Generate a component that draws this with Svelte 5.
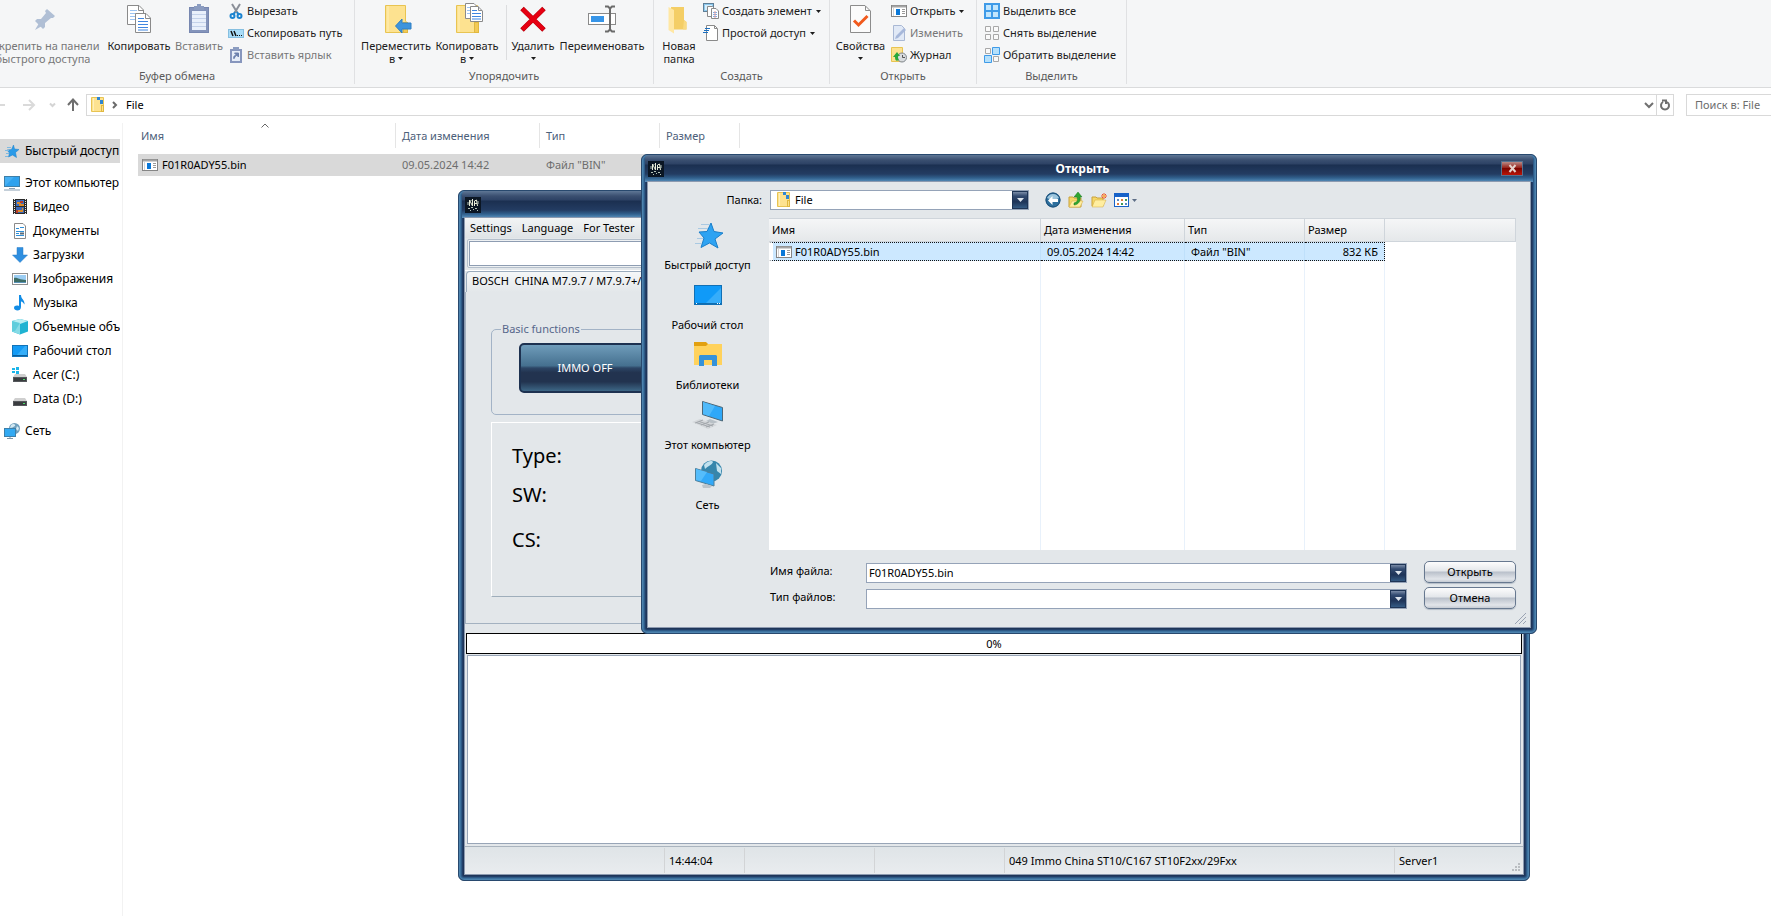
<script>
  const ribbon = [
    {
      label: 'Буфер обмена', width: 355, pad: 0, shift: true,
      big: [
        { icon: 'pin', w: 120, lines: ['Закрепить на панели', 'быстрого доступа'], off: true },
        { icon: 'copy', w: 72, lines: ['Копировать'] },
        { icon: 'paste', w: 48, lines: ['Вставить'], off: true }
      ],
      small: [
        { icon: 'cut', text: 'Вырезать' },
        { icon: 'path', text: 'Скопировать путь' },
        { icon: 'link', text: 'Вставить ярлык', off: true }
      ]
    },
    {
      label: 'Упорядочить', width: 299, pad: 3,
      big: [
        { icon: 'move', w: 76, lines: ['Переместить', 'в'], drop: true },
        { icon: 'copyto', w: 66, lines: ['Копировать', 'в'], drop: true, rule: true },
        { icon: 'delete', w: 46, lines: ['Удалить', ''], drop: true },
        { icon: 'rename', w: 92, lines: ['Переименовать'] }
      ],
      small: []
    },
    {
      label: 'Создать', width: 176, pad: 6,
      big: [{ icon: 'newfolder', w: 38, lines: ['Новая', 'папка'] }],
      small: [
        { icon: 'newitem', text: 'Создать элемент', drop: true },
        { icon: 'easy', text: 'Простой доступ', drop: true }
      ]
    },
    {
      label: 'Открыть', width: 147, pad: 0,
      big: [{ icon: 'props', w: 61, tight: true, lines: ['Свойства', ''], drop: true }],
      small: [
        { icon: 'bin', text: 'Открыть', drop: true },
        { icon: 'edit', text: 'Изменить', off: true },
        { icon: 'history', text: 'Журнал' }
      ]
    },
    {
      label: 'Выделить', width: 150, pad: 7,
      big: [],
      small: [
        { icon: 'selall', text: 'Выделить все' },
        { icon: 'selnone', text: 'Снять выделение' },
        { icon: 'selinv', text: 'Обратить выделение' }
      ]
    }
  ];

  const tree = [
    { icon: 'star', text: 'Быстрый доступ', root: true, on: true },
    { icon: 'pc', text: 'Этот компьютер', root: true, gap: true },
    { icon: 'video', text: 'Видео' },
    { icon: 'docs', text: 'Документы' },
    { icon: 'down', text: 'Загрузки' },
    { icon: 'pics', text: 'Изображения' },
    { icon: 'music', text: 'Музыка' },
    { icon: 'cube', text: 'Объемные объекты' },
    { icon: 'desk', text: 'Рабочий стол' },
    { icon: 'drivec', text: 'Acer (C:)' },
    { icon: 'drived', text: 'Data (D:)' },
    { icon: 'net', text: 'Сеть', root: true, gap: true }
  ];

  const places = [
    { icon: 'bigstar', text: 'Быстрый доступ' },
    { icon: 'bigdesk', text: 'Рабочий стол' },
    { icon: 'biglib', text: 'Библиотеки' },
    { icon: 'bigpc', text: 'Этот компьютер' },
    { icon: 'bignet', text: 'Сеть' }
  ];

  let fileName = $state('F01R0ADY55.bin');
</script>

{#snippet glyph(name)}
  {#if name === 'pin'}
    <path d="M20 6 28 13 26 15 24 15 18 20 18 24 16 26 8 18 10 16 14 16 19 10 18 8z" fill="#b0bfd5" /><path d="M12 20 15 23 8 27z" fill="#b0bfd5" />
  {:else if name === 'copy'}
    <path d="M4.500 2.500H16L20.500 7V21.500H4.500z" fill="#fff" stroke="#8a8a8a" /><path d="M15.500 2.500V7.500H20" fill="none" stroke="#8a8a8a" />
    <path d="M7 7.500H14M7 10.500H18M7 13.500H18M7 16.500H18" stroke="#9cc4f2" />
    <path d="M12.500 10.500H23L27.500 15V29.500H12.500z" fill="#fff" stroke="#8a8a8a" /><path d="M22.500 10.500V15.500H27" fill="none" stroke="#8a8a8a" />
    <path d="M15 15.500H21M15 18.500H25M15 21.500H25M15 24.500H25M15 27H25" stroke="#3f86e0" />
  {:else if name === 'paste'}
    <rect x="6.500" y="4.500" width="19" height="25" fill="#8494bb" stroke="#7787b0" /><rect x="9" y="8" width="14" height="19" fill="#e9f0fb" />
    <path d="M9 11.500H23M9 15.500H23M9 19.500H23M9 23.500H23" stroke="#c4d2ea" /><path d="M11 3H14V1H18V3H21V7H11z" fill="#8b9cc0" />
  {:else if name === 'move' || name === 'copyto'}
    <path d="M5.500 2.500H{name === 'move' ? '25.500V18' : '26.500V20'}L27.500 20V29.500H5.500z" fill="#fde290" stroke="#e8c452" /><path d="M8 3V29" stroke="#fff0b8" /><rect x="23.500" y="19.500" width="4" height="10" fill="#f3ca57" stroke="#e0b840" />
    {#if name === 'move'}
      <path d="M15.500 23 22 16V20H31V26H22V30z" fill="#3d94dd" stroke="#2f7fc4" />
    {:else}
      <path d="M14.500 .500H23L26.500 4V15.500H14.500z" fill="#fff" stroke="#8a8a8a" /><path d="M16 4.500H22M16 7.500H24M16 10.500H24" stroke="#9cc4f2" />
      <path d="M19.500 3.500H27L31.500 8V18.500H19.500z" fill="#fff" stroke="#8a8a8a" /><path d="M27.500 3.500V7.500H31" fill="none" stroke="#8a8a8a" /><path d="M21 7.500H26M21 10.500H30M21 13.500H30M21 16H30" stroke="#3f86e0" />
    {/if}
  {:else if name === 'delete'}
    <path d="M5 5.500 27 27M27 5.500 5 27" stroke="#b4000c" stroke-width="5" /><path d="M5.500 6 26.500 26.500M26.500 6 5.500 26.500" stroke="#e60012" stroke-width="4" />
  {:else if name === 'rename'}
    <rect x="2.500" y="10.500" width="27" height="11" fill="#fff" stroke="#8a8a8a" /><rect x="5" y="13" width="13" height="6" fill="#3795e8" />
    <path d="M19 3.500H22L24 5.500 26 3.500H29M24 5V27M19 28.500H22L24 26.500 26 28.500H29" fill="none" stroke="#6b6b6b" stroke-width="2" />
  {:else if name === 'newfolder'}
    <path d="M8 4H21V17L23.500 19V26.500H8z" fill="#f4ce66" /><path d="M5.500 4 11 7V30.500L5.500 27z" fill="#ffe7a3" /><path d="M21 17 23.500 19V26.500H20z" fill="#f9da82" />
  {:else if name === 'props'}
    <path d="M5.500 2.500H20L25.500 8V29.500H5.500z" fill="#fbfbfb" stroke="#8c8c8c" /><path d="M20.500 3V7.500H25" fill="none" stroke="#8c8c8c" /><path d="M9 17.500 13.500 22 22.500 13" fill="none" stroke="#f15a1d" stroke-width="3" />
  {:else if name === 'cut'}
    <path d="M4 1 9.500 10M12 1 6.500 10" stroke="#8a8f98" stroke-width="2" /><path d="M7 9 5 12M9 9 11 12" stroke="#1d84d0" stroke-width="2" /><circle cx="4.500" cy="13" r="2" fill="none" stroke="#1d84d0" stroke-width="2" /><circle cx="11.500" cy="13" r="2" fill="none" stroke="#1d84d0" stroke-width="2" />
  {:else if name === 'path'}
    <rect x=".500" y="4.500" width="15" height="8" fill="#a9dcf8" stroke="#86bfe0" /><path d="M3 6 5 11M6 6 8 11" stroke="#111" stroke-width="1.500" /><path d="M9 10.500H10M11 10.500H12M13 10.500H14" stroke="#111" />
  {:else if name === 'link'}
    <rect x="2" y="2" width="12" height="14" fill="#8796bd" /><rect x="4" y="4" width="8" height="10" fill="#e6edf8" /><rect x="5" y="0" width="6" height="3" fill="#8b9cc0" /><path d="M6 12C5 9 7 8 9 8M6.500 6H10.500V10z" fill="#6c80ad" stroke="#6c80ad" />
  {:else if name === 'newitem'}
    <rect x=".500" y=".500" width="10" height="8" fill="#8ec9ee" stroke="#5f7f97" /><rect x="2" y="2" width="7" height="5" fill="#d9effb" /><path d="M4.500 3.500H9.500L11.500 5.500V13.500H4.500z" fill="#fff" stroke="#8a8a8a" /><path d="M8.500 5.500H13L15.500 8V15.500H8.500z" fill="#fff" stroke="#8a8a8a" /><path d="M10 9.500H14M10 11.500H14M10 13.500H14" stroke="#7db0ea" /><path d="M12 8V15" stroke="#e39b9b" />
  {:else if name === 'easy'}
    <path d="M3.500 .500H11.500L14.500 3.500V15.500H3.500z" fill="#fff" stroke="#8a8a8a" /><path d="M11.500 .500V3.500H14" fill="none" stroke="#8a8a8a" /><path d="M2 3.500H7M1 5.500H6M0 7.500H5" stroke="#1b6fc0" />
  {:else if name === 'bin'}
    <rect x=".500" y="2.500" width="15" height="11" fill="#fff" stroke="#858585" /><path d="M1 3.500H15" stroke="#a5a5a5" stroke-width="2" /><rect x="5" y="6" width="4" height="6" fill="#0a78d8" /><path d="M11 6.500H14M11 8.500H14M11 10.500H14" stroke="#999" /><path d="M2.500 5V13" stroke="#d4d4d4" />
  {:else if name === 'edit'}
    <path d="M2.500 .500H10.500L13.500 3.500V15.500H2.500z" fill="#e1e9f6" stroke="#a9b8d4" /><path d="M4 14 5 11 13 3 15 5 7 13z" fill="#a7b8da" />
  {:else if name === 'history'}
    <path d="M.500 .500H11.500V14.500H.500z" fill="#fde290" stroke="#e8c452" /><circle cx="11" cy="10.500" r="4.500" fill="#d9dcdf" stroke="#7e858b" /><path d="M11.500 8V10.500H14" fill="none" stroke="#555" /><path d="M8 13C5 15 4 13 4 10H2L6 5 9 9H7C7 11 7 12 8 13z" fill="#2aa83a" />
  {:else if name === 'selall'}
    <path d="M0 0H16V16H0z" fill="#3f9be8" /><path d="M2 2H7V7H2zM9 2H14V7H9zM2 9H7V14H2zM9 9H14V14H9z" fill="#c2e6fd" />
  {:else if name === 'selnone'}
    <path d="M1.500 1.500H6.500V6.500H1.500zM9.500 1.500H14.500V6.500H9.500zM1.500 9.500H6.500V14.500H1.500zM9.500 9.500H14.500V14.500H9.500z" fill="#fafafa" stroke="#a8a8a8" />
  {:else if name === 'selinv'}
    <path d="M1.500 1.500H6.500V6.500H1.500zM9.500 9.500H14.500V14.500H9.500z" fill="#fafafa" stroke="#a8a8a8" /><path d="M8.500 .500H15.500V7.500H8.500zM.500 8.500H7.500V15.500H.500z" fill="#b5e0fb" stroke="#3f9be8" />
  {:else if name === 'star'}
    <path d="M9.500 2 10.500 6 15 6.500 11.500 9.500 12.500 14.500 8.500 12 4.500 14 5.500 10 3 7 7.500 6.500z" fill="#2b9be8" stroke="#1a7fc9" stroke-width=".5" /><path d="M3 4.500H7M1 7.500H5M2 10.500H5M1 13.500H4" stroke="#7fb9e0" />
  {:else if name === 'pc'}
    <rect x=".500" y="1.500" width="15" height="10" fill="#46b0f4" stroke="#3e7fa8" /><path d="M1 11 10 2H15V11z" fill="#2fa2ee" /><path d="M5 13.500H11M0 15H16" stroke="#8aa0b4" />
  {:else if name === 'video'}
    <rect x="1" y="0" width="14" height="15" fill="#2b2b2b" /><path d="M2.500 0V15M13.500 0V15" stroke="#e6e6e6" stroke-dasharray="1 1" /><rect x="4" y="1" width="8" height="6" fill="#3c6fc4" /><rect x="4" y="8" width="8" height="6" fill="#3a67b5" /><path d="M5 3H9V5H12V7H7V5H5zM6 11H10V9H11V13H6z" fill="#d98b2b" /><path d="M8 2H11V4H8zM4 11H6V14H4z" fill="#b83a2b" />
  {:else if name === 'docs'}
    <path d="M2.500 .500H11L13.500 3V15.500H2.500z" fill="#fff" stroke="#8a8a8a" /><path d="M4 5.500H7M8 4.500H12M4 8.500H12M4 10.500H7M4 12.500H12" stroke="#2e8fd8" /><path d="M8 10.500H12" stroke="#5d6b77" stroke-width="2" />
  {:else if name === 'down'}
    <path d="M5 .500H11V8H15.500L8 15.500 .500 8H5z" fill="#2f8fe0" stroke="#2b7cc6" stroke-width=".5" />
  {:else if name === 'pics'}
    <rect x=".500" y="2.500" width="15" height="11" fill="#fff" stroke="#8f8f8f" /><rect x="2" y="4" width="12" height="8" fill="#9bcdf3" /><path d="M2 7C5 6 7 9 14 9V12H2z" fill="#3d6d66" /><path d="M2 11H14V12H2z" fill="#5b93b8" />
  {:else if name === 'music'}
    <path d="M7 0H9C9 4 13 5 12.500 9.500 11.500 8 10.500 6.500 9 6.500V12C9 17 2 16 2 13 2 10.500 5 10 7 11z" fill="#128de6" />
  {:else if name === 'cube'}
    <path d="M8 0 16 2V12.500L8 15.500 0 12.500V2z" fill="#1fb3d2" /><path d="M0 2 8 4V15.500L0 12.500z" fill="#86dbe6" /><path d="M0 2 8 0 16 2 8 5z" fill="#b9eef2" /><path d="M0 2 8 4 3 12 0 12.500z" fill="#5fcddc" />
  {:else if name === 'desk'}
    <rect x=".500" y="2.500" width="15" height="11" fill="#149bf5" stroke="#1273b8" /><path d="M1 12.500H15" stroke="#0b5e9b" /><path d="M5 12 13 3H15V12z" fill="#35aef9" />
  {:else if name === 'drivec' || name === 'drived'}
    <path d="M3 7H13L15 10H1z" fill="#cfcfcf" /><rect x="1" y="10" width="14" height="5" fill="#55585c" /><rect x="2" y="11" width="12" height="3" fill="#3a3c3f" /><rect x="11" y="12" width="2" height="1" fill="#4be06a" />
    {#if name === 'drivec'}<path d="M0 1H3V3H0zM4 0H7V3H4zM0 4H3V6H0zM4 4H7V7H4z" fill="#1cb5ea" />{/if}
  {:else if name === 'net'}
    <circle cx="10.500" cy="5.500" r="5.500" fill="#6f9fbd" /><path d="M7 2C9 0 12 1 11 3 9 4 8 5 6 5zM13 3 15 5 14 8 12 6z" fill="#d3e9f3" /><rect x=".500" y="5.500" width="11" height="8" fill="#32a9f2" stroke="#3d7fa9" /><path d="M3 15.500H9M6 14V15" stroke="#7f95a6" />
  {:else if name === 'folder'}
    <path d="M.500 .500H12.500V14.500H.500z" fill="#fde290" stroke="#e8c452" /><path d="M2.500 1V14" stroke="#fff0b8" /><path d="M6 0H9V3H6zM9 3H12V7H9z" fill="#2f86d2" /><rect x="10.500" y="8.500" width="2" height="6" fill="#fbe08a" stroke="#e0b840" />
  {:else if name === 'app'}
    <rect width="16" height="16" fill="#0b1624" /><path d="M4.500 9V3L7.500 9V2M9.500 9V4L11.500 3 12.500 9M10 6.500H12" stroke="#e8ecd8" fill="none" /><path d="M3 5V8M6 3V4M13 4V7M3 11.500H5M6 10.500H8M10 11.500H12M5 13.500H6M8 12.500H9M12 13.500H13" stroke="#b4c2b8" fill="none" />
  {:else if name === 'bigstar'}
    <path d="M19 4 22 12.500 31 14 23 20 26 29 17.500 24 9 28.500 12 19 7 13 15 12.500z" fill="#2ea3f2" stroke="#1b7fca" /><path d="M9 5.500H18M6 9.500H16M5 19.500H11M3 24.500H10" stroke="#a9c9e2" />
  {:else if name === 'bigdesk'}
    <rect x="2.500" y="6.500" width="27" height="19" fill="#109af8" stroke="#1170b5" /><path d="M13 25 29 9V25z" fill="#36adfa" /><path d="M3 24.500H29" stroke="#0e6db0" /><path d="M4 24.500H5M25 24.500H26M27 24.500H28" stroke="#fff" />
  {:else if name === 'biglib'}
    <path d="M2 3H14L16 5V9H2z" fill="#e2a010" /><path d="M2 7H14L16 5H30V26H2z" fill="#ffd25c" /><path d="M7 17 8 16H24L25 17V27H20V21H12V27H7z" fill="#3492da" />
  {:else if name === 'bigpc'}
    <path d="M10.500 2.500 30.500 8.500V22L10.500 15.500z" fill="#2fa8f8" stroke="#4d6878" /><path d="M11 3 23 7 17 17 11 15z" fill="#50bafa" /><path d="M18 20 26 23 20 25 14 22z" fill="#b8c0c6" /><path d="M0 23 8 20 25 26 16 30z" fill="#d4d7da" /><path d="M4 23.500 18 28M7 22.500 21 27M3 24 11 21M9 26 17 23M14 28 22 25" stroke="#a2a7ac" />
  {:else if name === 'bignet'}
    <circle cx="19.500" cy="12" r="10.500" fill="#3686ac" /><path d="M12 6C15 2 20 1 21 3 20 6 16 7 13 10zM24 4 29 9 29 15 25 12z" fill="#c1e1ee" /><path d="M3.500 9.500 22 15V27L3.500 21.500z" fill="#32a9f8" stroke="#4d7f9a" /><path d="M4 10 15 13 9 22 4 21z" fill="#55bdfb" /><path d="M10 26 14 25 20 27 18 29 11 29z" fill="#bcc4ca" />
  {:else if name === 'back'}
    <circle cx="8" cy="8" r="7.500" fill="#2d6f9d" /><path d="M2 6A6.500 6.500 0 0 1 14 6C10 8 6 8 2 6z" fill="#9cc5dd" /><circle cx="8" cy="8" r="7" fill="none" stroke="#1e4f78" /><path d="M3 8.500 7.500 4V7H13V10H7.500V13z" fill="#fff" />
  {:else if name === 'up'}
    <path d="M1 5H5L6 6H13V15H1z" fill="#f5d767" stroke="#c9a13a" /><path d="M4 9H15L12 15H1z" fill="#ffeea0" stroke="#d1a840" stroke-width=".5" /><path d="M6 11C9 10 10 9 9 5H6L10 0 14 5H12C13 9 10 13 6 13z" fill="#2fa62f" stroke="#1d7a22" stroke-width=".5" />
  {:else if name === 'create'}
    <path d="M1 5H5L6 6H12V14H1z" fill="#f5d767" stroke="#c9a13a" /><path d="M4 8H15L12 15H1z" fill="#ffeea0" stroke="#d1a840" stroke-width=".5" /><path d="M13 1V7M10 4H16M11 2 15 6M15 2 11 6" stroke="#ee5a28" /><circle cx="13" cy="4" r="1" fill="#ffd34d" />
  {:else if name === 'view'}
    <rect x=".500" y="1.500" width="14" height="13" fill="#fff" stroke="#1762c8" /><rect y="1" width="15" height="4" fill="#1762c8" /><path d="M3 7H5V9H3zM11 11H13V13H11z" fill="#5a8ac0" /><path d="M7 7H9V9H7zM3 11H5V13H3z" fill="#e07b3c" /><path d="M11 7H13V9H11zM7 11H9V13H7z" fill="#3f9a55" />
  {/if}
{/snippet}

{#snippet icon(name, size = 16)}
  <svg class="ico" width={size} height={size} viewBox="0 0 {size} {size}" aria-hidden="true">{@render glyph(name)}</svg>
{/snippet}

{#snippet caret()}
  <svg class="caret" width="5" height="3" viewBox="0 0 5 3" aria-hidden="true"><path d="M0 0H5L2.500 3z" fill="currentColor" /></svg>
{/snippet}

{#snippet arrow()}
  <svg width="7" height="4" viewBox="0 0 7 4" aria-hidden="true"><path d="M0 0H7L3.500 4z" fill="#dfe6ee" /></svg>
{/snippet}

<div class="desktop">
  <header class="ribbon">
    {#each ribbon as g}
      <section class="group" style:width="{g.width}px" aria-label={g.label}>
        <div class="tools" class:shift={g.shift} style:padding-left="{g.pad}px">
          {#each g.big as b}
            <button class="big" class:off={b.off} style:width="{b.w}px">
              {@render icon(b.icon, 32)}
              {#each b.lines as line, i}
                <span class="line">{line}{#if b.drop && i === b.lines.length - 1}{@render caret()}{/if}</span>
              {/each}
            </button>
            {#if b.rule}<i class="rule"></i>{/if}
          {/each}
          {#if g.small.length}
            <div class="stack" class:spaced={g.big.length && !g.big[0].tight}>
              {#each g.small as s}
                <button class="small" class:off={s.off}>{@render icon(s.icon)}<span>{s.text}</span>{#if s.drop}{@render caret()}{/if}</button>
              {/each}
            </div>
          {/if}
        </div>
        <div class="caption">{g.label}</div>
      </section>
    {/each}
  </header>

  <div class="address">
    <nav class="arrows" aria-label="Переходы">
      <svg width="86" height="22" viewBox="0 0 86 22" aria-hidden="true">
        <path d="M-6 11H5M23 11H34M29 6 34 11 29 16" fill="none" stroke="#dadada" stroke-width="2" />
        <path d="M50 9.500 52.500 12 55 9.500" fill="none" stroke="#d4d4d4" stroke-width="2" />
        <path d="M73 17V6M68 11 73 5.500 78 11" fill="none" stroke="#6e6e6e" stroke-width="2" />
      </svg>
    </nav>
    <div class="crumbs">
      {@render icon('folder')}
      <svg width="6" height="8" viewBox="0 0 6 8" aria-hidden="true"><path d="M1 1 4 4 1 7" fill="none" stroke="#6a6a6a" stroke-width="2" /></svg>
      <span class="crumb">File</span>
      <svg class="end" width="10" height="8" viewBox="0 0 10 8" aria-hidden="true"><path d="M1 2 5 6 9 2" fill="none" stroke="#707070" stroke-width="2" /></svg>
      <button class="reload" aria-label="Обновить">
        <svg width="12" height="12" viewBox="0 0 12 12" aria-hidden="true"><path d="M8 3A4 4 0 1 1 4 3M3 1.500H7V5" fill="none" stroke="#707070" stroke-width="2" /></svg>
      </button>
    </div>
    <input class="search" placeholder="Поиск в: File" aria-label="Поиск в: File" />
  </div>

  <main class="explorer">
    <nav class="tree">
      {#each tree as t}
        <a href="#top" class:root={t.root} class:on={t.on} class:gap={t.gap}>{@render icon(t.icon)}<span>{t.text}</span></a>
      {/each}
    </nav>
    <div class="files">
      <svg class="sort" width="8" height="5" viewBox="0 0 8 5" aria-hidden="true"><path d="M.500 4.500 4 1 7.500 4.500" fill="none" stroke="#666" /></svg>
      <table>
        <colgroup><col class="c1" /><col class="c2" /><col class="c3" /><col class="c4" /></colgroup>
        <thead><tr><th>Имя</th><th>Дата изменения</th><th>Тип</th><th>Размер</th></tr></thead>
        <tbody><tr><td><div class="name">{@render icon('bin')}F01R0ADY55.bin</div></td><td>09.05.2024 14:42</td><td>Файл "BIN"</td><td>832 КБ</td></tr></tbody>
      </table>
    </div>
  </main>

  <section class="window tool">
    <div class="title">{@render icon('app')}</div>
    <div class="body">
      <nav class="menu"><button>Settings</button><button>Language</button><button>For Tester</button></nav>
      <div class="well"><input aria-label="Path" /></div>
      <div class="tabs"><button class="tab">BOSCH&nbsp; CHINA M7.9.7 / M7.9.7+/ME7.9.7</button></div>
      <div class="page">
        <fieldset><legend>Basic functions</legend><button class="immo">IMMO OFF</button></fieldset>
        <div class="info"><p>Type:</p><p>SW:</p><p>CS:</p></div>
      </div>
      <div class="progress" role="progressbar" aria-valuenow="0" aria-label="Progress">0%</div>
      <textarea class="log" aria-label="Log"></textarea>
      <footer class="status">
        <span class="s1"></span><span class="s2">14:44:04</span><span class="s3"></span><span class="s4"></span><span class="s5">049 Immo China ST10/C167 ST10F2xx/29Fxx</span><span class="s6">Server1</span>
        <svg width="9" height="9" viewBox="0 0 9 9" aria-hidden="true"><path d="M6 0H8V2H6zM3 3H5V5H3zM6 3H8V5H6zM0 6H2V8H0zM3 6H5V8H3zM6 6H8V8H6z" fill="#b9bdc1" /></svg>
      </footer>
    </div>
  </section>

  <section class="window dialog" role="dialog" aria-label="Открыть">
    <div class="title">{@render icon('app')}<h1>Открыть</h1><button class="close" aria-label="Закрыть"><svg width="9" height="9" viewBox="0 0 9 9" aria-hidden="true"><path d="M1.500 1 7.500 8M7.500 1 1.500 8" stroke="#e6d2cc" stroke-width="2" /></svg></button></div>
    <div class="body">
      <div class="look">
        <label for="folder">Папка:</label>
        <div class="combo where">
          <span class="lead">{@render icon('folder')}</span>
          <select id="folder"><option>File</option></select>
          <span class="arrow">{@render arrow()}</span>
        </div>
        <div class="bar">
          <button aria-label="Назад">{@render icon('back')}</button>
          <button aria-label="Вверх">{@render icon('up')}</button>
          <button aria-label="Создать папку">{@render icon('create')}</button>
          <button aria-label="Вид">{@render icon('view')}{@render caret()}</button>
        </div>
      </div>
      <nav class="places">
        {#each places as p}
          <button>{@render icon(p.icon, 32)}<span>{p.text}</span></button>
        {/each}
      </nav>
      <div class="list">
        <table>
          <colgroup><col class="d1" /><col class="d2" /><col class="d3" /><col class="d4" /><col /></colgroup>
          <thead><tr><th>Имя</th><th>Дата изменения</th><th>Тип</th><th>Размер</th><th></th></tr></thead>
          <tbody>
            <tr class="sel"><td><div class="name">{@render icon('bin')}F01R0ADY55.bin</div></td><td>09.05.2024 14:42</td><td>Файл "BIN"</td><td>832 КБ</td><td></td></tr>
            <tr class="rest"><td></td><td></td><td></td><td></td><td></td></tr>
          </tbody>
        </table>
      </div>
      <div class="form">
        <label for="fname">Имя файла:</label>
        <div class="combo"><input id="fname" bind:value={fileName} /><span class="arrow">{@render arrow()}</span></div>
        <button class="cmd">Открыть</button>
        <label for="ftype">Тип файлов:</label>
        <div class="combo"><select id="ftype"><option></option></select><span class="arrow">{@render arrow()}</span></div>
        <button class="cmd">Отмена</button>
      </div>
      <svg class="grip" width="12" height="12" viewBox="0 0 12 12" aria-hidden="true"><path d="M0 11 11 0M4 11 11 4M8 11 11 8" stroke="#9aa3b3" /></svg>
    </div>
  </section>
</div>

<style>
  :global(body) { margin: 0; background: #fff; }
  .desktop { position: relative; display: flex; flex-direction: column; min-height: 100vh; overflow: hidden; font: 12px/16px "Noto Sans", "Open Sans", sans-serif; color: #000; }
  .desktop :is(button, input, select, textarea) { font: inherit; color: inherit; margin: 0; padding: 0; border: 0; border-radius: 0; background: none; box-sizing: border-box; outline: 0; }
  .ico { flex: none; display: block; }
  .caret { flex: none; }

  .ribbon { display: flex; height: 87px; background: #f5f6f7; border-bottom: 1px solid #dadbdc; color: #1c1c1c; font-size: 11px; }
  .group { display: flex; flex-direction: column; flex: none; box-sizing: border-box; height: 84px; border-right: 1px solid #e0e1e3; }
  .tools { display: flex; align-items: flex-start; height: 71px; white-space: nowrap; }
  .shift { margin-left: -17px; }
  .desktop .big { display: flex; flex-direction: column; align-items: center; flex: none; padding-top: 3px; line-height: 13px; }
  .big .ico { margin-bottom: 4px; }
  .line { display: flex; align-items: center; gap: 3px; min-height: 13px; }
  .off span { color: #777; }
  .rule { width: 1px; height: 55px; margin: 5px 3px 0 6px; background: #dcdddf; }
  .stack { display: flex; flex-direction: column; }
  .spaced { margin-left: 5px; }
  .small { display: flex; align-items: center; gap: 3px; height: 22px; }
  .small .caret { margin-left: 1px; }
  .caption { line-height: 16px; text-align: center; color: #5a5a5a; }

  .address { display: flex; height: 22px; margin: 6px 0 7px; font-size: 11px; }
  .arrows { display: flex; }
  .crumbs { display: flex; flex: 1; align-items: center; gap: 5px; padding-left: 4px; border: 1px solid #d9d9d9; box-sizing: border-box; }
  .crumb { margin-left: 3px; }
  .end { margin-left: auto; margin-right: -3px; }
  .reload { display: grid; place-items: center; width: 17px; height: 20px; }
  .desktop .reload { border-left: 1px solid #d9d9d9; }
  .desktop .search { width: 90px; margin: 0 -5px 0 12px; padding-left: 8px; border: 1px solid #d9d9d9; }
  .search::placeholder { color: #6d6d6d; opacity: 1; }

  .explorer { display: flex; flex: 1; }
  .tree { width: 122px; padding-top: 16px; border-right: 1px solid #f2f2f2; font-size: 12px; }
  .tree a { display: flex; align-items: center; gap: 5px; width: 108px; height: 24px; padding-left: 12px; overflow: hidden; white-space: nowrap; color: #000; text-decoration: none; }
  .tree .root { width: 116px; padding-left: 4px; }
  .tree .gap { margin-top: 8px; }
  .tree .on { background: #d9d9d9; }
  .files { position: relative; flex: 1; padding-left: 15px; }
  .sort { position: absolute; left: 138px; top: 0; }
  table { border-collapse: separate; border-spacing: 0; table-layout: fixed; }
  th, td { padding: 0; text-align: left; font-weight: 400; white-space: nowrap; }
  .files table { width: 602px; }
  .c1 { width: 258px; } .c2 { width: 144px; } .c3 { width: 120px; } .c4 { width: 80px; }
  .files th { height: 25px; padding-left: 6px; border-right: 1px solid #e5e5e5; color: #4c607a; font-size: 11px; }
  .files th:first-child { padding-left: 3px; }
  .files thead::after { content: ""; display: block; height: 6px; }
  .files td { height: 22px; padding-left: 6px; background: #d9d9d9; color: #6d6d6d; font-size: 11px; }
  .files td:first-child { padding-left: 4px; color: #000; }
  .name { display: flex; align-items: center; gap: 4px; }

  .window { position: absolute; display: flex; flex-direction: column; box-sizing: border-box; padding: 0 6px 6px; border: 1px solid #28496e; border-radius: 6px; background: #1f3558; box-shadow: inset 0 0 0 1px #4d83ae, inset 0 0 0 2px #3d729f, inset 0 0 0 3px #2d5985, inset 0 0 0 4px #223f69; font-size: 11px; line-height: 14px; }
  .title { display: flex; align-items: center; flex: none; height: 27px; margin: 0 -3px; padding: 0 3px; border-radius: 4px 4px 0 0; background: linear-gradient(#5f7796, #3a4f70 5px, #2d4265 9px, #1b2f50 10px, #233c62 19px, #31608d 23px, #5a92bf); }
  .body { display: flex; flex: 1; flex-direction: column; min-height: 0; background: #e3e7ea; box-shadow: 0 0 0 1px #8c9ab0; }

  .tool { left: 458px; top: 190px; width: 1072px; height: 691px; }
  .menu { display: flex; gap: 10px; padding: 0 5px; height: 20px; align-items: center; background: linear-gradient(#f2f4f5, #dfe3e6); }
  .well { margin: 1px 2px 0; padding: 1px; border: 1px solid #b4bfcb; border-radius: 2px; background: #eef1f3; }
  .desktop .well input { display: block; width: 100%; height: 25px; border: 1px solid #8e9db2; background: #fff; }
  .tabs { margin-top: 2px; padding-left: 1px; border-top: 1px solid #fff; }
  .desktop .tab { height: 21px; padding: 0 5px 2px; border: 1px solid #9aabbd; border-bottom: 0; border-radius: 4px 4px 0 0; background: linear-gradient(#f5f7f8, #e3e7ea); white-space: pre; }
  .page { display: flex; flex: none; flex-direction: column; box-sizing: border-box; height: 332px; padding: 30px 25px 0; border: 1px solid #a3b1c0; border-width: 0 0 1px 1px; }
  fieldset { margin: 0; padding: 7px 27px 21px; border: 1px solid #a3b3c6; border-radius: 5px; min-width: 0; }
  legend { padding: 0 1px; margin-left: -18px; color: #56668a; font-size: 11px; line-height: 14px; }
  .desktop .immo { display: block; width: 132px; height: 50px; border: 2px solid #1d3150; border-radius: 5px; color: #fff; background: linear-gradient(#6f9cba, #45708f 45%, #2c4565 50%, #22334f 60%, #22334f 80%, #3d6786); }
  .info { height: 175px; margin-top: 7px; padding: 19px 20px 0; box-sizing: border-box; border: 1px solid #fff; border-bottom-color: #9faebb; font-size: 20px; line-height: 28px; }
  .info p { margin: 0 0 11px; }
  .info p + p { margin-bottom: 17px; }
  .progress { margin: 9px 1px 0; height: 21px; flex: none; box-sizing: border-box; border: 1px solid #000; background: #fff; text-align: center; line-height: 19px; }
  .desktop .log { flex: 1; margin: 1px 2px 2px; border: 1px solid #98a5b7; background: #fff; resize: none; }
  .status { display: flex; flex: none; align-items: center; height: 28px; border-top: 1px solid #aab4be; background: linear-gradient(#dfe4e7, #e9ecef); box-sizing: border-box; }
  .status span { box-sizing: border-box; height: 25px; padding-left: 4px; border-right: 1px solid #d2d4d6; line-height: 25px; white-space: nowrap; }
  .status .s1 { width: 200px; } .status .s2 { width: 80px; } .status .s3, .status .s4 { width: 130px; } .status .s5 { width: 390px; }
  .status .s6 { flex: 1; border: 0; }
  .status svg { align-self: flex-end; margin: 2px; }

  .dialog { left: 641px; top: 154px; width: 896px; height: 480px; }
  h1 { flex: 1; margin: 0; text-align: center; color: #fff; font-size: 12px; font-weight: 700; line-height: 16px; }
  .close { display: grid; place-items: center; width: 22px; height: 15px; }
  .desktop .close { border: 1px solid #14233d; outline: 1px solid #56718f; outline-offset: -1px; margin-right: 7px; background: linear-gradient(#b98a86, #982018 45%, #7c0500 50%, #bb1408); }
  .dialog .body { display: grid; grid-template: 36px 332px 1fr / 121px 1fr; position: relative; padding-right: 14px; }
  .look { grid-column: 1 / -1; display: flex; align-items: center; height: 36px; }
  .look label { width: 114px; text-align: right; }
  .combo { position: relative; display: flex; flex: 1; height: 20px; box-sizing: border-box; border: 1px solid #95a3b8; background: #fff; }
  .combo.where { flex: none; width: 259px; margin-left: 8px; }
  .lead { position: absolute; left: 6px; top: 1px; pointer-events: none; }
  .desktop .combo :is(select, input) { flex: 1; width: 100%; padding: 0 20px 0 2px; appearance: none; line-height: 16px; }
  .desktop .combo #folder { padding-left: 24px; }
  .arrow { position: absolute; right: 0; top: 0; bottom: 0; display: grid; place-items: center; width: 16px; background: linear-gradient(#8c9cb5, #324a70 5px, #1e3458 60%, #38618b); box-shadow: inset 0 0 0 1px #1f3556; pointer-events: none; }
  .bar { display: flex; gap: 7px; margin-left: 16px; color: #5d6e86; }
  .bar button { display: flex; align-items: center; gap: 2px; }
  .places { display: flex; flex-direction: column; padding-right: 2px; }
  .places button { display: flex; flex-direction: column; align-items: center; height: 60px; padding: 1px 0 0; }
  .places span { margin-top: 7px; }
  .list { background: #fff; display: flex; }
  .list table { width: 100%; height: 332px; }
  .d1 { width: 272px; } .d2 { width: 144px; } .d3 { width: 120px; } .d4 { width: 80px; }
  .list th { height: 24px; padding-left: 3px; border: 1px solid #cfd5db; border-width: 1px 1px 1px 0; box-sizing: border-box; background: linear-gradient(#f5f6f7, #e5e8ea); }
  .list td { height: 19px; padding-left: 6px; box-sizing: border-box; }
  .list td:not(:last-child) { border-right: 1px solid #e8f1fb; }
  .sel td:not(:last-child) { border-top: 1px dotted #111; border-bottom: 1px dotted #111; background: #cce8ff; }
  .list .sel td:not(:nth-child(n + 4)) { border-right: 1px solid #bfe0fb; }
  .sel td:first-child { padding-left: 3px; border-left: 4px solid #fff; }
  .sel td:nth-child(4) { padding-right: 6px; text-align: right; border-right: 1px dotted #111; }
  .sel .name { gap: 3px; }
  .list .rest td { height: auto; }
  .form { grid-column: 2; display: grid; grid-template-columns: 97px 1fr 92px; grid-template-rows: 22px 22px; row-gap: 4px; align-items: center; align-content: start; padding-top: 11px; }
  .form label { padding: 0 0 2px 1px; }
  .form .combo { align-self: end; margin-right: 17px; }
  .desktop .cmd { height: 22px; border: 1px solid #67788f; border-radius: 5px; background: linear-gradient(#fdfdfd, #e3e6ea 45%, #b9c0ca 50%, #e2e5ea 85%, #c5cbd3); box-shadow: 0 1px 1px #b3bcc7; }
  .grip { position: absolute; right: 3px; bottom: 2px; }
</style>
